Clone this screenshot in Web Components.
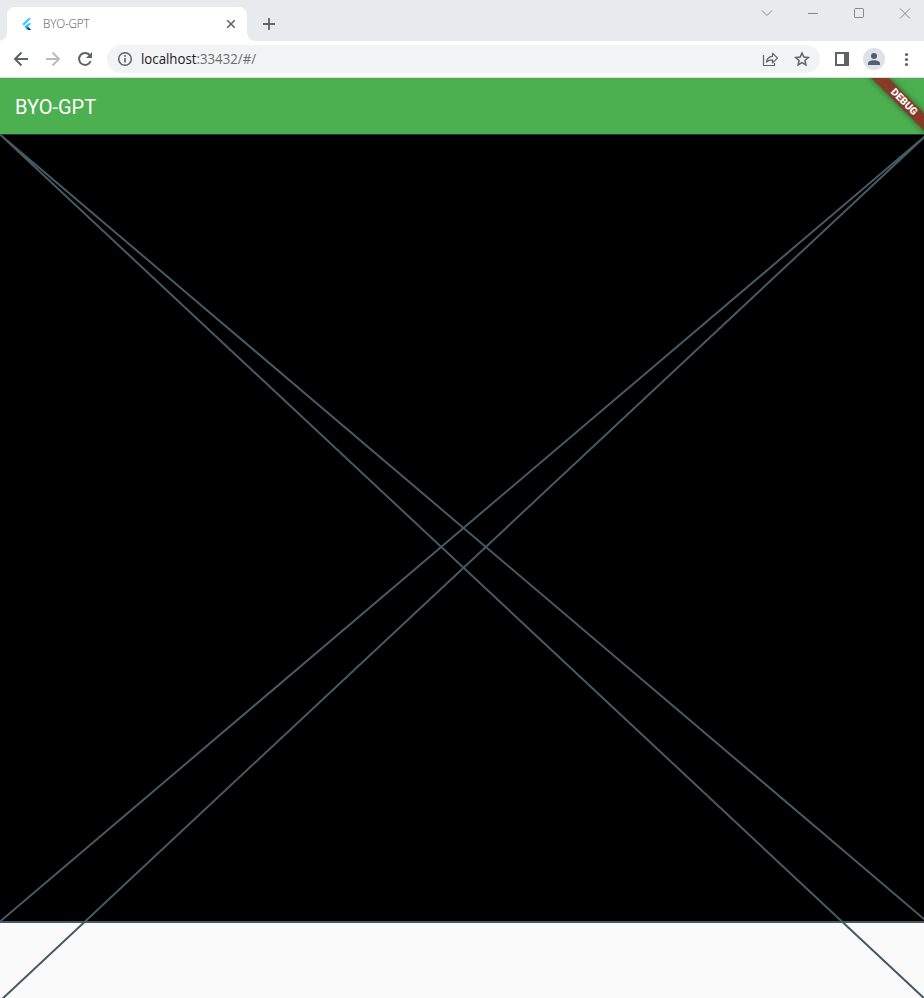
<!DOCTYPE html>
<html lang="en"><head><meta charset="utf-8"><title>BYO-GPT</title>
<style>html,body{margin:0;height:100%;overflow:hidden;background:#fafafa}</style></head>
<body><browser-window></browser-window>
<script>
const define=(name,html)=>customElements.define(name,class extends HTMLElement{
  constructor(){super();this.attachShadow({mode:'open'}).innerHTML=html;}
});
define('tab-strip',`<style>
:host{display:flex;height:41px;background:#e8eaed;box-sizing:border-box;padding-left:7px;align-items:flex-end;font:350 12.500px "Open Sans","Noto Sans",sans-serif;color:#505357}
.tab{position:relative;display:flex;align-items:center;width:240px;height:34px;background:#fff;border-radius:8px 8px 0 0;box-sizing:border-box;padding:0 11px 0 12px}
.tab::before,.tab::after{content:"";position:absolute;bottom:0;width:8px;height:8px}
.tab::before{left:-8px;background:radial-gradient(circle at 0 0,transparent 7.5px,#fff 8px)}
.tab::after{right:-8px;background:radial-gradient(circle at 100% 0,transparent 7.5px,#fff 8px)}
.name{margin-left:8px;margin-top:-2px;flex:1;letter-spacing:-.15px}
.name span{display:inline-block;transform:scaleX(.93);transform-origin:0 50%}
svg{display:block;flex:none}
.plus{margin:0 0 10px 15px}
.win{display:flex;margin-left:auto;align-self:flex-start}
</style>
<div class="tab"><svg width="16" height="16" viewBox="0 0 16 16"><path d="M9.3 2.300h3L5 9.700 3.300 8.100z" fill="#47c5fb"/><path d="M9.3 7.300h3l-3.200 3.600-2-1.700z" fill="#47c5fb"/><path d="M5.600 10.700l1.700-1.700 2 2-1.700 1.900z" fill="#00b5f8"/><path d="M7.600 12.700l1.700-1.700 3 3H9z" fill="#00459e"/></svg>
<span class="name"><span>BYO-GPT</span></span>
<svg width="10" height="10"><path d="M1.200 1.200l7.600 7.600M8.800 1.200L1.200 8.800" stroke="#5f6368" stroke-width="1.600"/></svg></div>
<svg class="plus" width="14" height="14"><path d="M7 1v12M1 7h12" stroke="#5f6368" stroke-width="1.800"/></svg>
<div class="win"><svg width="180" height="28" fill="none" stroke="#87898c" stroke-width="1"><path d="M18 10.500l5 5 5-5M64 13.500h10"/><rect x="110.500" y="8.500" width="9" height="9" rx="1"/><path d="M156 8.500l10 10M166 8.500l-10 10"/></svg></div>`);
define('address-bar',`<style>
:host{display:flex;height:37px;background:#fff;box-sizing:border-box;border-bottom:1px solid #dadce0;align-items:center;padding-left:12px;font:14px "Open Sans","Noto Sans",sans-serif}
svg{display:block;flex:none}
.box{display:flex;align-items:center;width:713px;height:28px;border-radius:14px;background:#f1f3f4;color:#6b6f73;box-sizing:border-box;padding:0 9px}
.url{margin:-2px 0 0 7px;flex:1;white-space:nowrap;transform:scaleX(.946);transform-origin:0 50%}.url b{font-weight:400;color:#202124}
</style>
<svg width="95" height="36" viewBox="12 41 95 36" fill="none" stroke-width="2"><path d="M28 59H15.500M21.500 52.500L15 59l6.500 6.500" stroke="#5f6368"/><path d="M46 59h12.500M52.500 52.500L59 59l-6.500 6.500" stroke="#babcbe"/><path d="M90 55.500A6 6 0 1 0 90.700 61" stroke="#5f6368"/><path d="M92 52v6h-6z" fill="#5f6368"/></svg>
<div class="box"><svg width="18" height="18" fill="none" stroke="#5f6368"><circle cx="9" cy="9" r="6.300" stroke-width="1.500"/><path d="M9 8v4.500M9 5v1.700" stroke-width="1.600"/></svg>
<span class="url"><b>localhost</b>:33432/#/</span>
<svg width="52" height="24" viewBox="759 47 52 24" fill="none" stroke="#5f6368"><path d="M763.500 55v10.500h11V63" stroke-width="1.200"/><path d="M766.500 62c.5-4 2.500-5.500 6-5.700v-3l5 4.800-5 4.700v-3c-2.500 0-4.500.5-6 2.200z" stroke-width="1.200" stroke-linejoin="round"/><path d="M802 53l1.800 4.100 4.500.4-3.400 3 1 4.400-3.900-2.300-3.900 2.300 1-4.400-3.400-3 4.500-.4z" stroke-width="1.500"/></svg></div>
<svg width="104" height="36" viewBox="820 41 104 36"><path fill="#5f6368" fill-rule="evenodd" d="M835 52h14v14h-14zM837 54v10h7V54z"/><circle cx="874" cy="59" r="11" fill="#dee1e6"/><circle cx="874" cy="56" r="3" fill="#535e73"/><path d="M868 65v-1.500c0-2 3-3.200 6-3.200s6 1.200 6 3.200V65z" fill="#535e73"/><g fill="#5f6368"><circle cx="906.500" cy="54.500" r="1.600"/><circle cx="906.500" cy="59.500" r="1.600"/><circle cx="906.500" cy="64.500" r="1.600"/></g></svg>`);
define('app-bar',`<style>
:host{display:flex;position:relative;height:56px;background:#4caf50;align-items:center;padding-left:15px;font:20px Roboto,sans-serif;color:#fff;overflow:hidden}
.title{font-weight:450;padding-top:2px}
</style><span class="title"><slot></slot></span><debug-banner></debug-banner>`);
define('debug-banner',`<style>
:host{position:absolute;right:-35px;top:18px;width:110px;height:12px;background:#883a29;box-shadow:0 0 6px rgba(0,0,0,.5);transform:rotate(45deg);text-align:center;font:900 10.200px/12px Roboto,sans-serif;color:#fff}
</style>DEBUG`);
define('crossed-placeholder',`<style>:host{display:block;height:864px}svg{display:block}</style>
<svg width="924" height="864" viewBox="0 134 924 864" fill="none" stroke="#455a64" stroke-width="2"><path d="M0 134h924v787H0z" fill="#000" stroke="none"/><path d="M0 134.500h924" stroke-width="1" stroke="#26343a"/><path d="M0 922h924M0 134.500L927 921.500M927 134.500L0 921.500M0 134.500L927 1001M927 134.500L0 1001"/></svg>`);
define('browser-window',`<style>:host{display:block;width:924px;height:998px;overflow:hidden;background:#fafafa}</style>
<tab-strip></tab-strip><address-bar></address-bar><app-bar>BYO-GPT</app-bar><crossed-placeholder></crossed-placeholder>`);
</script></body></html>
